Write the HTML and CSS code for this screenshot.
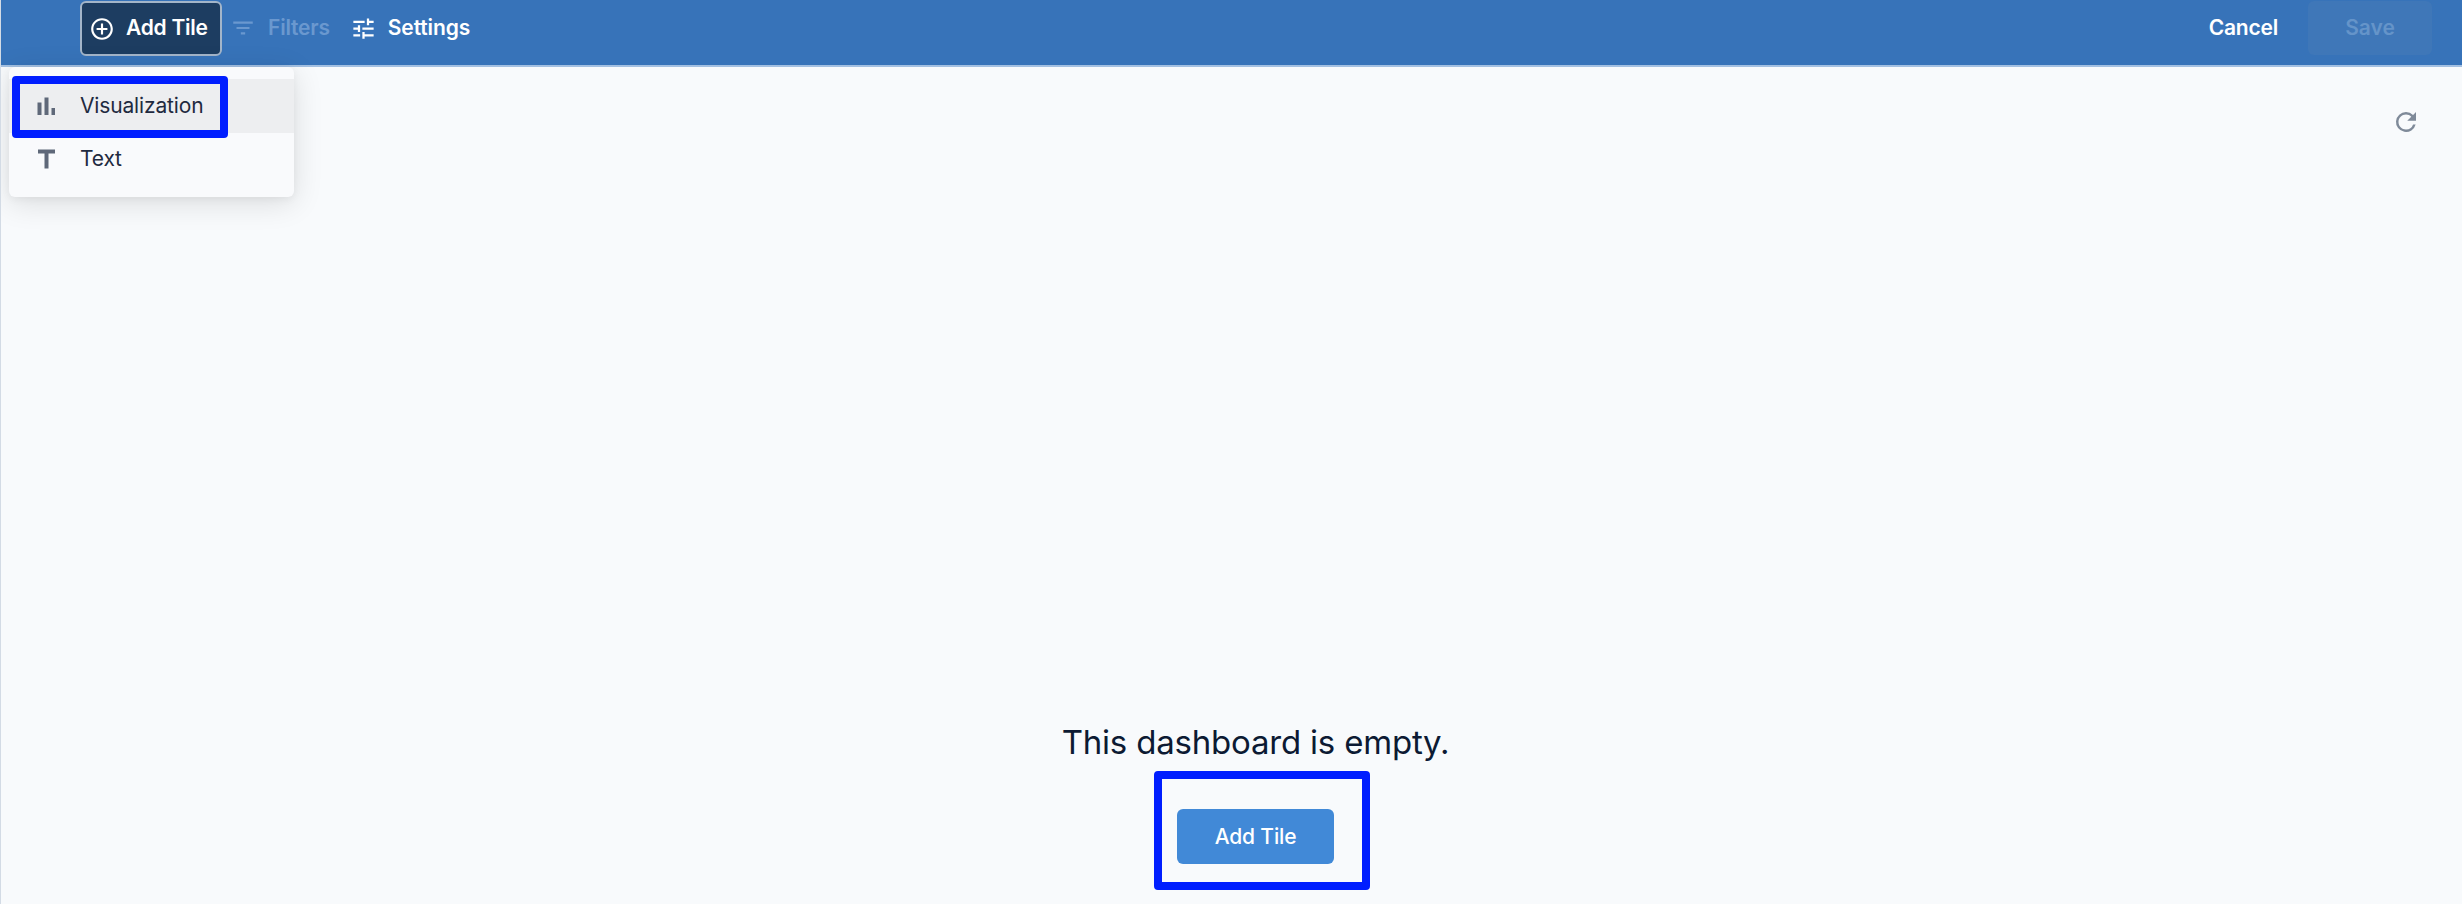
FILE: index.html
```html
<!DOCTYPE html>
<html lang="en">
<head>
<meta charset="utf-8">
<title>Dashboard</title>
<link rel="stylesheet" href="styles.css">
</head>
<body>
<div class="app">
  <header class="toolbar">
    <div class="tools">
      <button class="tool tool-active">
        <svg class="icon" viewBox="0 0 24 24"><path d="M13 7h-2v4H7v2h4v4h2v-4h4v-2h-4V7zm-1-5C6.480 2 2 6.480 2 12s4.480 10 10 10 10-4.480 10-10S17.520 2 12 2zm0 18c-4.410 0-8-3.590-8-8s3.590-8 8-8 8 3.590 8 8-3.590 8-8 8z"/></svg>
        <span class="label label-add">Add Tile</span>
      </button>
      <button class="tool tool-disabled">
        <svg class="icon" viewBox="0 0 24 24"><path d="M10 18h4v-2h-4v2zM3 6v2h18V6H3zm3 7h12v-2H6v2z"/></svg>
        <span class="label">Filters</span>
      </button>
      <button class="tool tool-settings">
        <svg class="icon" viewBox="0 0 24 24"><path d="M3 17v2h6v-2H3zM3 5v2h10V5H3zm10 16v-2h8v-2h-8v-2h-2v6h2zM7 9v2H3v2h4v2h2V9H7zm14 4v-2H11v2h10zm-6-4h2V7h4V5h-4V3h-2v6z"/></svg>
        <span class="label">Settings</span>
      </button>
    </div>
    <div class="actions">
      <button class="cancel">Cancel</button>
      <button class="save">Save</button>
    </div>
  </header>

  <div class="menu">
    <div class="menu-item menu-item-hover">
      <svg class="icon" viewBox="0 0 26 26"><path d="M4.500 9.500h4V22h-4zM11.500 4.500h4V22h-4zM18.500 15h3.500v7h-3.500z"/></svg>
      <span>Visualization</span>
      <div class="marker marker-menu"></div>
    </div>
    <div class="menu-item menu-item-text">
      <svg class="icon" viewBox="0 0 26 26"><path d="M5 3.500v4h6.500V22.500h4V7.500H22v-4z"/></svg>
      <span>Text</span>
    </div>
  </div>

  <main class="content">
    <svg class="refresh" viewBox="0 0 24 24"><path d="M17.650 6.350A7.958 7.958 0 0 0 12 4a8 8 0 1 0 7.730 10h-2.080A5.990 5.990 0 0 1 12 18c-3.310 0-6-2.690-6-6s2.690-6 6-6c1.660 0 3.140.69 4.220 1.780L13 11h7V4l-2.350 2.350z"/></svg>
    <section class="empty">
      <h1 class="empty-title">This dashboard is empty.</h1>
      <div class="empty-action">
        <button class="primary">Add Tile</button>
        <div class="marker marker-button"></div>
      </div>
    </section>
  </main>
</div>
</body>
</html>
```
FILE: styles.css
```css
* { box-sizing: border-box; }

body {
  margin: 0;
  background: #f8fafc;
  color: #0c1a33;
  font-family: Inter, "Liberation Sans", sans-serif;
  font-size: 21px;
}

button {
  margin: 0;
  padding: 0;
  border: 0;
  background: none;
  color: inherit;
  font: inherit;
  letter-spacing: inherit;
  white-space: nowrap;
}

.app {
  position: relative;
  display: flex;
  flex-direction: column;
  height: 904px;
  overflow: hidden;
  border-left: 1px solid #d3dbe5;
}

.toolbar {
  display: flex;
  justify-content: space-between;
  height: 67px;
  padding: 1px 30px 0 79px;
  border-bottom: 2px solid #a3c0e2;
  background: #3773b9;
  color: #fff;
  font-weight: 600;
}

.tools, .actions { display: flex; align-items: flex-start; }

.tool { display: flex; align-items: center; height: 54px; }

.tool-active {
  width: 142px;
  height: 55px;
  padding-left: 7px;
  border: 2px solid #a3b5c9;
  border-radius: 6px;
  background: #1d3d61;
}

.icon { flex: none; width: 26px; height: 26px; fill: currentColor; }

.label { padding-bottom: 2px; }
.label-add { padding-bottom: 3px; letter-spacing: -0.25px; }

.tool-active .icon { margin-right: 11px; }
.tool-disabled { margin-left: 8px; color: #6a98cf; }
.tool-disabled .icon { margin-right: 12px; }
.tool-disabled .label { letter-spacing: -0.2px; }
.tool-settings { margin-left: 20px; }
.tool-settings .icon { width: 27px; height: 27px; margin-right: 11px; }
.tool-settings .label { letter-spacing: -0.1px; }

.cancel { height: 54px; margin-right: 30px; padding-bottom: 2px; letter-spacing: -0.2px; }

.save {
  width: 124px;
  height: 54px;
  padding-bottom: 2px;
  border-radius: 6px;
  background: #3f77b8;
  color: #6594c9;
}

.menu {
  position: absolute;
  z-index: 2;
  top: 67px;
  left: 8px;
  width: 285px;
  height: 130px;
  padding-top: 12px;
  border-radius: 6px;
  background: #f9fafc;
  box-shadow: 0 6px 30px rgba(0, 0, 0, 0.12), 0 2px 8px rgba(0, 0, 0, 0.05);
  color: #1f2a40;
}

.menu-item {
  position: relative;
  display: flex;
  align-items: center;
  height: 54px;
  padding-left: 24px;
  letter-spacing: -0.15px;
}

.menu-item span { padding-bottom: 1px; }
.menu-item-hover { background: #edeef0; }
.menu-item-text { height: 52px; }
.menu-item .icon { margin-right: 21px; fill: #5f6879; }

.marker { position: absolute; border: 8px solid #001eff; border-radius: 4px; }
.marker-menu { top: -3px; left: 3px; width: 216px; height: 62px; }
.marker-button { top: -38px; left: -23px; width: 216px; height: 119px; }

.content { display: flex; flex: 1; flex-direction: column; }

.refresh {
  align-self: flex-end;
  width: 30px;
  height: 30px;
  margin: 40px 41px 0 0;
  fill: #7f8a99;
}

.empty {
  display: flex;
  flex-direction: column;
  align-items: center;
  margin-top: auto;
  padding: 0 0 40px 48px;
}

.empty-title {
  margin: 0 0 46px;
  font-size: 33px;
  font-weight: 400;
  letter-spacing: -0.2px;
  line-height: 42px;
}

.empty-action { position: relative; width: 157px; }

.primary {
  display: block;
  width: 157px;
  height: 55px;
  border-radius: 6px;
  background: #4189d7;
  color: #fff;
  font-weight: 500;
  letter-spacing: -0.15px;
}
```
